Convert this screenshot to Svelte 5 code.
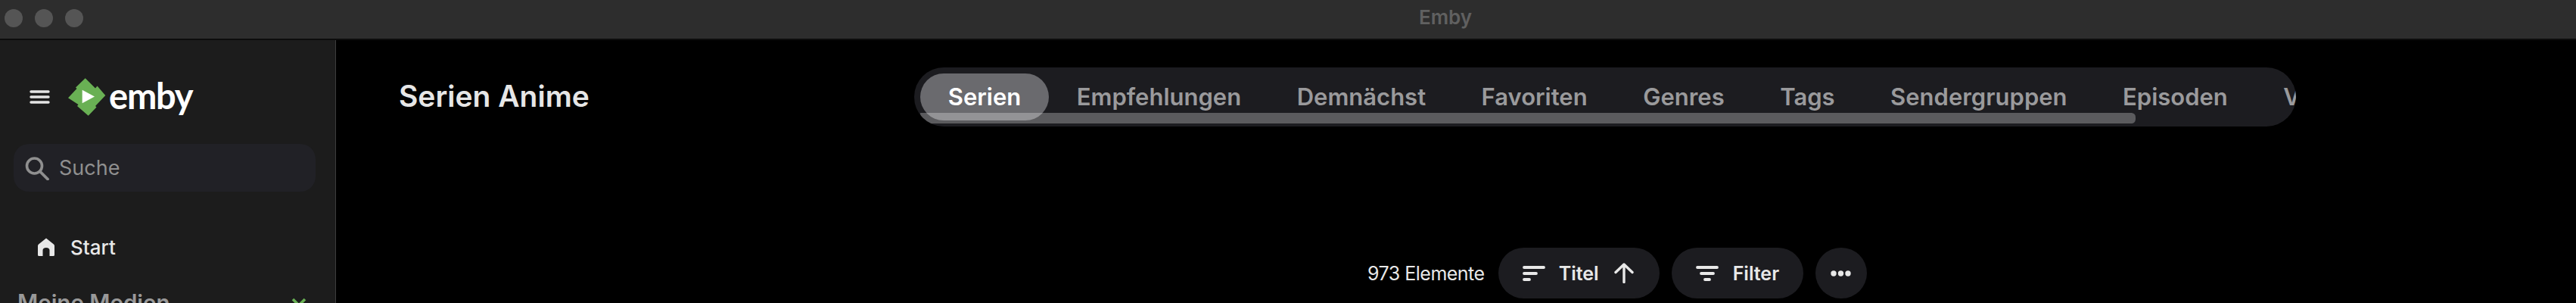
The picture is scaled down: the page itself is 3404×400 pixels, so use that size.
<script lang="ts">
  const tabs = ["Serien", "Empfehlungen", "Demnächst", "Favoriten", "Genres", "Tags", "Sendergruppen", "Episoden", "Videos"];
</script>

<div class="window">
  <header class="titlebar">
    <div class="lights">
      <span></span>
      <span></span>
      <span></span>
    </div>
    <span class="window-title">Emby</span>
  </header>

  <div class="body">
    <aside class="sidebar">
      <div class="brand">
        <svg class="burger" viewBox="0 0 27 18" width="27" height="18">
          <path d="M2 2h23M2 9h23M2 16h23" stroke="#e4e4e4" stroke-width="3.4" stroke-linecap="round" fill="none" />
        </svg>
        <svg class="logo" viewBox="0 0 50 50" width="50" height="50">
          <path
            d="M22.7 0.3 36 13.5l2.5-3L49.3 23 36 37l1.5 1.5L26.7 49.7 12 37l1.5-2L0 26.3 11.5 14 10 12.5Z"
            fill="#69b054"
          />
          <path d="M18.7 15.7v17.6L35 24.5Z" fill="#fff" />
        </svg>
        <span class="wordmark">emby</span>
      </div>

      <div class="search">
        <svg viewBox="0 0 32 32" width="32" height="32">
          <circle cx="12.5" cy="13" r="10" stroke="#8f8f8f" stroke-width="3.6" fill="none" />
          <path d="M20 20.5 30 30.5" stroke="#8f8f8f" stroke-width="3.8" stroke-linecap="round" />
        </svg>
        <span>Suche</span>
      </div>

      <nav class="nav">
        <div class="nav-item">
          <svg viewBox="0 0 22 24" width="22" height="24">
            <path
              d="M11 0.5 21 8.5Q22 9.3 22 10.5V22.5Q22 24 20.5 24H15.5V16.5Q15.5 13 11 13T6.5 16.5V24H1.5Q0 24 0 22.5V10.5Q0 9.3 1 8.5Z"
              fill="#e8e8e8"
            />
          </svg>
          <span>Start</span>
        </div>
        <div class="section">
          <span>Meine Medien</span>
          <svg viewBox="0 0 20 12" width="20" height="12">
            <path d="M2 2 10 10 18 2" stroke="#69b054" stroke-width="3.6" fill="none" />
          </svg>
        </div>
      </nav>
    </aside>

    <main class="main">
      <div class="head">
        <h1>Serien Anime</h1>
        <div class="tabs">
          {#each tabs as tab, i (tab)}
            <span class="tab" class:active={i === 0}>{tab}</span>
          {/each}
          <div class="scrollbar"></div>
        </div>
      </div>

      <div class="toolbar">
        <span class="count">973 Elemente</span>
        <button class="pill sort">
          <svg viewBox="0 0 30 20" width="30" height="20">
            <path d="M2 2h26M2 10h16M2 18h7" stroke="#e8e8e8" stroke-width="3.8" stroke-linecap="round" fill="none" />
          </svg>
          <span>Titel</span>
          <svg class="arrow" viewBox="0 0 26 27" width="26" height="27">
            <path d="M13 25.5V2M2 12.5 13 2l11 10.5" stroke="#e8e8e8" stroke-width="3.4" stroke-linecap="round" stroke-linejoin="round" fill="none" />
          </svg>
        </button>
        <button class="pill filter">
          <svg viewBox="0 0 30 20" width="30" height="20">
            <path d="M2 2h26M7 10h16M12 18h6" stroke="#e8e8e8" stroke-width="3.8" stroke-linecap="round" fill="none" />
          </svg>
          <span>Filter</span>
        </button>
        <button class="pill more" aria-label="Mehr">
          <svg viewBox="0 0 27 8" width="27" height="8">
            <circle cx="4" cy="4" r="3.7" fill="#e8e8e8" />
            <circle cx="13.5" cy="4" r="3.7" fill="#e8e8e8" />
            <circle cx="23" cy="4" r="3.7" fill="#e8e8e8" />
          </svg>
        </button>
      </div>
    </main>
  </div>
</div>

<style>
  :global(body) {
    margin: 0;
    background: #000;
  }

  .window {
    height: 400px;
    overflow: hidden;
    display: flex;
    flex-direction: column;
    font-family: Inter, "Liberation Sans", sans-serif;
  }

  .titlebar {
    flex: none;
    height: 51px;
    border-bottom: 2px solid #0c0c0c;
    background: #2d2d2d;
    display: flex;
    align-items: center;
    justify-content: center;
    padding-left: 416px;
    position: relative;
  }

  .lights {
    position: absolute;
    left: 6px;
    top: 12px;
    display: flex;
    gap: 16px;
  }

  .lights span {
    width: 24px;
    height: 24px;
    border-radius: 50%;
    background: #555;
  }

  .window-title {
    color: #606060;
    font-size: 26px;
    font-weight: 600;
    margin-top: -6px;
  }

  .body {
    flex: 1;
    display: flex;
    min-height: 0;
  }

  .sidebar {
    flex: none;
    width: 444px;
    box-sizing: border-box;
    border-right: 1px solid #3c3c3c;
    background: #1c1c1c;
    padding: 50px 26px 0 18px;
  }

  .brand {
    display: flex;
    align-items: center;
    height: 50px;
    padding-left: 21px;
  }

  .logo {
    margin-left: 24px;
  }

  .wordmark {
    margin-left: 4px;
    margin-top: -5px;
    color: #fff;
    font-size: 47px;
    font-weight: 700;
    letter-spacing: -1.2px;
    line-height: 50px;
    font-family: Lato, Inter, sans-serif;
  }

  .search {
    margin-top: 37px;
    height: 63px;
    border-radius: 20px;
    background: #212126;
    display: flex;
    align-items: center;
    gap: 13px;
    padding-left: 15px;
    color: #8f8f8f;
    font-size: 27px;
  }

  .nav {
    margin-top: 57px;
  }

  .nav-item {
    display: flex;
    align-items: center;
    gap: 21px;
    padding-left: 32px;
    height: 32px;
    color: #e8e8e8;
    font-size: 26px;
    font-weight: 500;
  }

  .section {
    margin-top: 39px;
    display: flex;
    justify-content: space-between;
    align-items: center;
    padding: 0 12px 0 5px;
    color: #999;
    font-size: 29.5px;
    font-weight: 600;
  }

  .main {
    flex: 1;
    min-width: 0;
    background: #000;
  }

  .head {
    margin-top: 36px;
    padding-left: 83px;
    display: flex;
    align-items: center;
  }

  h1 {
    flex: none;
    width: 681px;
    margin: -3px 0 0;
    color: #e6e6e6;
    font-size: 39px;
    font-weight: 600;
  }

  .tabs {
    flex: none;
    width: 1810px;
    height: 62px;
    padding: 8px;
    border-radius: 39px;
    background: #1c1c20;
    display: flex;
    overflow: hidden;
    position: relative;
  }

  .tab {
    flex: none;
    display: flex;
    align-items: center;
    padding: 0 36.75px 2px;
    border-radius: 31px;
    color: #9a9a9c;
    font-size: 31px;
    font-weight: 600;
  }

  .tab.active {
    background: #6a6a6e;
    color: #fff;
  }

  .scrollbar {
    position: absolute;
    left: 8px;
    top: 60px;
    width: 1606px;
    height: 14px;
    border-radius: 0 7px 7px 18px;
    background: rgba(255, 255, 255, 0.28);
  }

  .toolbar {
    margin-top: 160px;
    margin-left: 1363px;
    display: flex;
    align-items: center;
    gap: 16px;
  }

  .count {
    color: #e8e8e8;
    font-size: 25px;
    letter-spacing: -0.5px;
    margin-right: 2px;
  }

  .pill {
    height: 67px;
    border: none;
    border-radius: 34px;
    background: #1c1c20;
    color: #e8e8e8;
    font-family: inherit;
    font-size: 25px;
    font-weight: 600;
    display: flex;
    align-items: center;
    padding: 0;
  }

  .sort {
    width: 213px;
    padding-left: 32px;
  }

  .sort span {
    margin-left: 18px;
  }

  .sort .arrow {
    margin-left: 20px;
  }

  .filter {
    width: 174px;
    padding-left: 32px;
  }

  .filter span {
    margin-left: 19px;
  }

  .more {
    width: 68px;
    justify-content: center;
  }
</style>
